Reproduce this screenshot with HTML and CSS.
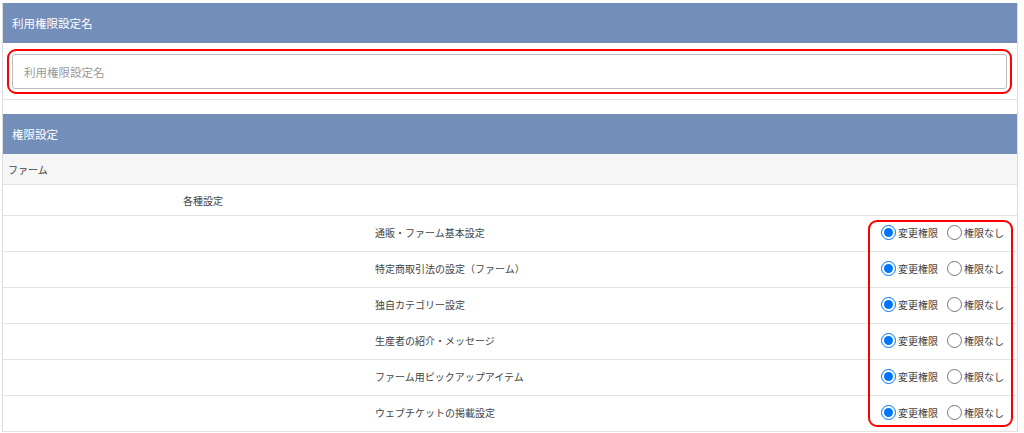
FILE: index.html
```html
<!DOCTYPE html>
<html lang="ja">
<head>
    <meta charset="UTF-8" />
    <meta name="viewport" content="width=device-width, initial-scale=1" />
    <title>利用権限設定</title>
    <link rel="stylesheet" href="styles.css">
</head>
<body>
    <div class="page">
        <div class="panel-head">利用権限設定名</div>
        <div class="name-body">
            <div class="mark mark-input">
                <input type="text" class="name-input" placeholder="利用権限設定名" />
            </div>
        </div>

        <div class="spacer"></div>

        <div class="panel-head">権限設定</div>
        <div class="row row-l1">ファーム</div>
        <div class="row row-l2">各種設定</div>
        <div class="perm-list">
            <div class="row row-l3">
                <span class="perm-name">通販・ファーム基本設定</span>
                <span class="opts">
                    <label><input type="radio" name="p1" checked />変更権限</label>
                    <label><input type="radio" name="p1" />権限なし</label>
                </span>
            </div>
            <div class="row row-l3">
                <span class="perm-name">特定商取引法の設定（ファーム）</span>
                <span class="opts">
                    <label><input type="radio" name="p2" checked />変更権限</label>
                    <label><input type="radio" name="p2" />権限なし</label>
                </span>
            </div>
            <div class="row row-l3">
                <span class="perm-name">独自カテゴリー設定</span>
                <span class="opts">
                    <label><input type="radio" name="p3" checked />変更権限</label>
                    <label><input type="radio" name="p3" />権限なし</label>
                </span>
            </div>
            <div class="row row-l3">
                <span class="perm-name">生産者の紹介・メッセージ</span>
                <span class="opts">
                    <label><input type="radio" name="p4" checked />変更権限</label>
                    <label><input type="radio" name="p4" />権限なし</label>
                </span>
            </div>
            <div class="row row-l3">
                <span class="perm-name">ファーム用ピックアップアイテム</span>
                <span class="opts">
                    <label><input type="radio" name="p5" checked />変更権限</label>
                    <label><input type="radio" name="p5" />権限なし</label>
                </span>
            </div>
            <div class="row row-l3">
                <span class="perm-name">ウェブチケットの掲載設定</span>
                <span class="opts">
                    <label><input type="radio" name="p6" checked />変更権限</label>
                    <label><input type="radio" name="p6" />権限なし</label>
                </span>
            </div>
            <!-- 注釈の赤枠 -->
            <div class="mark mark-radios"></div>
        </div>
    </div>
</body>
</html>
```

FILE: styles.css
```css
body {
    font-family: "Noto Sans CJK JP", "Noto Sans", sans-serif;
    margin: 0;
    padding: 3px 6px 0 2px;
    background-color: #fff;
    color: #444;
}

.page {
    border-left: 1px solid #dcdcdc;
    border-right: 1px solid #dcdcdc;
}

.panel-head {
    height: 40px;
    display: flex;
    align-items: center;
    padding-left: 9px;
    background-color: #738eb9;
    color: #fff;
    font-size: 11.5px;
}

.name-body {
    padding: 6px 5px 5px 4px;
    border-bottom: 1px solid #e2e2e2;
}

.mark {
    border: 2px solid #f00;
    border-radius: 9px;
}

.mark-input {
    padding: 3px;
}

.name-input {
    display: block;
    box-sizing: border-box;
    width: 100%;
    height: 35px;
    padding: 0 11px;
    border: 1px solid #bcbcbc;
    border-radius: 3px;
    font-family: inherit;
    font-size: 11.5px;
    color: #444;
    outline: none;
}

.name-input::placeholder {
    color: #9a9a9a;
}

.spacer {
    height: 14px;
}

.row {
    display: flex;
    align-items: center;
    box-sizing: border-box;
    border-bottom: 1px solid #e4e4e4;
    font-size: 10px;
}

.row-l1 {
    height: 31px;
    padding-left: 5px;
    background-color: #f6f6f6;
}

.row-l2 {
    height: 31px;
    padding-left: 180px;
}

.perm-list {
    position: relative;
}

.row-l3 {
    height: 36px;
    padding-left: 372px;
    padding-right: 13px;
    padding-bottom: 3px;
}

.row-l3:last-child {
    height: 34px;
}

.perm-name {
    flex: 1;
}

.opts {
    display: flex;
    gap: 9px;
}

.opts label {
    display: flex;
    align-items: center;
    gap: 2px;
}

.opts input[type="radio"] {
    width: 15px;
    height: 15px;
    margin: 0;
}

.mark-radios {
    position: absolute;
    top: 4px;
    bottom: 5px;
    right: 4px;
    width: 141px;
    pointer-events: none;
}
```
